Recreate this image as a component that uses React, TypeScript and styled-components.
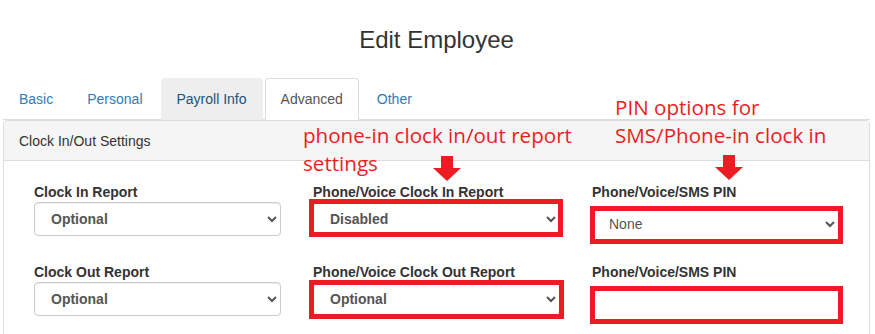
import React from "react";
import styled, { createGlobalStyle } from "styled-components";

const GlobalStyle = createGlobalStyle`
  html, body { margin: 0; padding: 0; background: #fff; }
  body {
    font-family: "Liberation Sans", Arial, sans-serif;
    font-size: 14px;
    color: #333;
  }
`;

const RED = "#ed1c24";

const Page = styled.div`
  position: relative;
  width: 875px;
  height: 334px;
  overflow: hidden;
  padding: 0 5px 0 3px;
  box-sizing: border-box;
`;

const Title = styled.h2`
  margin: 0 0 24px;
  padding-top: 26px;
  text-align: center;
  font-size: 24px;
  font-weight: 400;
  line-height: 28px;
  color: #333;
`;

const Tabs = styled.ul`
  display: flex;
  list-style: none;
  margin: 0;
  padding: 0;
  border-bottom: 1px solid #ddd;
`;

const Tab = styled.li<{ $state?: "active" | "hover" }>`
  margin: 0 2px -1px 0;
  padding: 10px 15px;
  line-height: 20px;
  border: 1px solid transparent;
  border-radius: 4px 4px 0 0;
  color: #337ab7;
  ${(p) =>
    p.$state === "active" &&
    `color: #555; background: #fff; border-color: #ddd #ddd transparent;`}
  ${(p) => p.$state === "hover" && `color: #23527c; background: #eee;`}
`;

const Panel = styled.div`
  border: 1px solid #ddd;
  border-radius: 4px;
  height: 260px;
`;

const PanelHeading = styled.div`
  padding: 10px 15px 9px;
  line-height: 20px;
  background: #f5f5f5;
  border-bottom: 1px solid #ddd;
  border-radius: 3px 3px 0 0;
  color: #333;
`;

const PanelBody = styled.div`
  padding: 21px 30px;
`;

const FieldGrid = styled.div`
  display: grid;
  grid-template-columns: repeat(3, 247px);
  column-gap: 32px;
  row-gap: 21px;
`;

const Field = styled.div`
  display: flex;
  flex-direction: column;
`;

const Label = styled.label<{ $gap?: number }>`
  display: block;
  font-weight: 700;
  line-height: 20px;
  color: #333;
  margin-bottom: ${(p) => p.$gap ?? 0}px;
`;

const Highlight = styled.div<{
  $on?: boolean;
  $t?: number;
  $r?: number;
  $b?: number;
  $l?: number;
}>`
  position: relative;
  &::after {
    content: "";
    display: ${(p) => (p.$on ? "block" : "none")};
    position: absolute;
    top: ${(p) => p.$t ?? -3}px;
    right: ${(p) => p.$r ?? -3}px;
    bottom: ${(p) => p.$b ?? -3}px;
    left: ${(p) => p.$l ?? -4}px;
    border: 5px solid ${RED};
    pointer-events: none;
  }
`;

const controlBase = `
  width: 100%;
  height: 34px;
  box-sizing: border-box;
  padding: 6px 12px;
  font-family: "Liberation Sans", Arial, sans-serif;
  font-size: 14px;
  color: #555;
  background: #fff;
  border: 1px solid #ccc;
  border-radius: 4px;
  box-shadow: inset 0 1px 1px rgba(0, 0, 0, 0.075);
`;

const Select = styled.select<{ $bold?: boolean }>`
  ${controlBase}
  font-weight: ${(p) => (p.$bold ? 700 : 400)};
`;

const TextInput = styled.input`
  ${controlBase}
`;

const Note = styled.div<{ $x: number; $y: number }>`
  position: absolute;
  left: ${(p) => p.$x}px;
  top: ${(p) => p.$y}px;
  font-family: "Open Sans", "Noto Sans", sans-serif;
  font-size: 20.6px;
  line-height: 28px;
  color: ${RED};
  white-space: nowrap;
`;

const ArrowWrap = styled.svg<{ $x: number; $y: number }>`
  position: absolute;
  left: ${(p) => p.$x}px;
  top: ${(p) => p.$y}px;
`;

const Arrow = ({ x, y }: { x: number; y: number }) => (
  <ArrowWrap $x={x} $y={y} width="28" height="25" viewBox="0 0 28 25">
    <polygon points="8,0 20,0 20,12 28,12 14,25 0,12 8,12" fill={RED} />
  </ArrowWrap>
);

export default function App() {
  return (
    <>
      <GlobalStyle />
      <Page>
        <Title>Edit Employee</Title>
        <Tabs>
          <Tab>Basic</Tab>
          <Tab>Personal</Tab>
          <Tab $state="hover">Payroll Info</Tab>
          <Tab $state="active">Advanced</Tab>
          <Tab>Other</Tab>
        </Tabs>
        <Panel>
          <PanelHeading>Clock In/Out Settings</PanelHeading>
          <PanelBody>
            <FieldGrid>
              <Field>
                <Label>Clock In Report</Label>
                <Select $bold defaultValue="Optional">
                  <option>Optional</option>
                  <option>Required</option>
                  <option>Disabled</option>
                </Select>
              </Field>
              <Field>
                <Label>Phone/Voice Clock In Report</Label>
                <Highlight $on $t={-3} $r={-3} $b={-1} $l={-4}>
                  <Select $bold defaultValue="Disabled">
                    <option>Optional</option>
                    <option>Required</option>
                    <option>Disabled</option>
                  </Select>
                </Highlight>
              </Field>
              <Field>
                <Label $gap={5}>Phone/Voice/SMS PIN</Label>
                <Highlight $on $t={-1} $r={-4} $b={-3} $l={-2}>
                  <Select defaultValue="None">
                    <option>None</option>
                    <option>Required</option>
                  </Select>
                </Highlight>
              </Field>
              <Field>
                <Label>Clock Out Report</Label>
                <Select $bold defaultValue="Optional">
                  <option>Optional</option>
                  <option>Required</option>
                  <option>Disabled</option>
                </Select>
              </Field>
              <Field>
                <Label>Phone/Voice Clock Out Report</Label>
                <Highlight $on $t={-2} $r={-4} $b={-3} $l={-4}>
                  <Select $bold defaultValue="Optional">
                    <option>Optional</option>
                    <option>Required</option>
                    <option>Disabled</option>
                  </Select>
                </Highlight>
              </Field>
              <Field>
                <Label $gap={5}>Phone/Voice/SMS PIN</Label>
                <Highlight $on $t={-1} $r={-4} $b={-3} $l={-2}>
                  <TextInput type="text" />
                </Highlight>
              </Field>
            </FieldGrid>
          </PanelBody>
        </Panel>
        <Note $x={303} $y={121}>
          phone-in clock in/out report
          <br />
          settings
        </Note>
        <Note $x={615} $y={93}>
          PIN options for
          <br />
          SMS/Phone-in clock in
        </Note>
        <Arrow x={433} y={156} />
        <Arrow x={715} y={155} />
      </Page>
    </>
  );
}
